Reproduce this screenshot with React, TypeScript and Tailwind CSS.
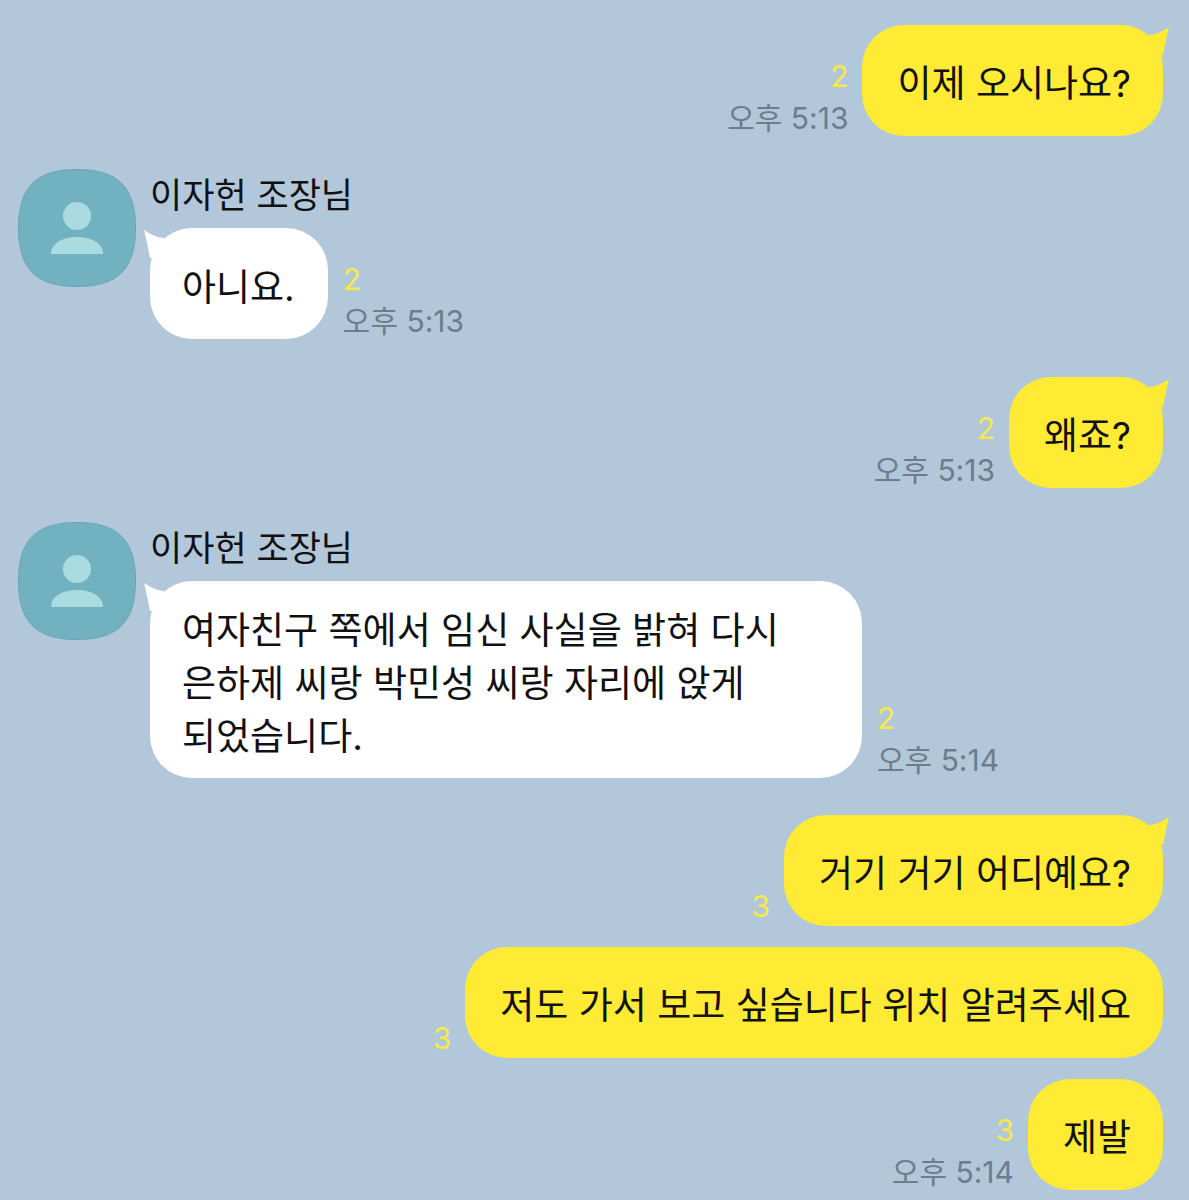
const font = { fontFamily: 'Inter, "Noto Sans CJK KR", "Noto Sans", sans-serif' };

function Meta({ count, time, align }: { count: string; time?: string; align: "left" | "right" }) {
  return (
    <div className={`flex flex-col ${align === "right" ? "items-end mr-[14px]" : "items-start ml-[15px]"} mb-[-2px]`}>
      <span className="text-[#f6ea4a] text-[30px] leading-[44px]">{count}</span>
      {time && <span className="text-[#6d7d8c] text-[30px] leading-[40px]">{time}</span>}
    </div>
  );
}

function MyBubble({ text, tail }: { text: string; tail?: boolean }) {
  return (
    <div className="relative bg-[#ffeb33] rounded-[42px] h-[111px] pl-[35px] pr-[32px] pt-[6px] flex items-center text-[37px] text-[#111] whitespace-nowrap">
      {tail && (
        <svg className="absolute right-[-6px] top-[2px]" width="30" height="30" viewBox="0 0 30 30">
          <path d="M10 8 Q18 8 30 0 Q27 12 24 28 L8 28 Z" fill="#ffeb33" />
        </svg>
      )}
      <span className="relative">{text}</span>
    </div>
  );
}

function MyRow({ text, count, time, tail, className }: { text: string; count: string; time?: string; tail?: boolean; className?: string }) {
  return (
    <div className={`flex justify-end items-end ${className ?? ""}`}>
      <Meta count={count} time={time} align="right" />
      <MyBubble text={text} tail={tail} />
    </div>
  );
}

function Avatar() {
  return (
    <svg className="shrink-0" width="118" height="118" viewBox="0 0 118 118">
      <path d="M59 .5C100 .5 117.5 18 117.5 59S100 117.5 59 117.5.5 100 .5 59 18 .5 59 .5Z" fill="#72b1bf" stroke="#68a6b4" />
      <circle cx="59" cy="47" r="14" fill="#a9dbe1" />
      <path d="M33 85C33 74 45 68 59 68S85 74 85 85Z" fill="#a9dbe1" />
    </svg>
  );
}

function TheirRow({ text, count, time, className }: { text: string; count: string; time: string; className?: string }) {
  return (
    <div className={`flex ${className ?? ""}`}>
      <Avatar />
      <div className="ml-[14px] min-w-0">
        <div className="text-[35px] leading-[52px] text-[#111] mb-[7px] h-[52px]">이자헌 조장님</div>
        <div className="flex items-end">
          <div className="relative bg-white rounded-[42px] min-h-[111px] max-w-[712px] pl-[32px] pr-[33px] pt-[23px] pb-[15px] flex items-center text-[37px] leading-[53px] text-[#111] [word-break:keep-all]">
            <svg className="absolute left-[-6px] top-[2px]" width="30" height="30" viewBox="0 0 30 30">
              <path d="M20 8 Q12 8 0 0 Q3 12 6 28 L22 28 Z" fill="#fff" />
            </svg>
            <span className="relative">{text}</span>
          </div>
          <Meta count={count} time={time} align="left" />
        </div>
      </div>
    </div>
  );
}

export default function App() {
  return (
    <div className="w-[1189px] h-[1200px] overflow-hidden bg-[#b2c7da] pt-[25px] pl-[18px] pr-[26px]" style={font}>
      <MyRow text="이제 오시나요?" count="2" time="오후 5:13" tail />
      <TheirRow className="mt-[33px]" text="아니요." count="2" time="오후 5:13" />
      <MyRow className="mt-[38px]" text="왜죠?" count="2" time="오후 5:13" tail />
      <TheirRow className="mt-[34px]" text="여자친구 쪽에서 임신 사실을 밝혀 다시 은하제 씨랑 박민성 씨랑 자리에 앉게 되었습니다." count="2" time="오후 5:14" />
      <MyRow className="mt-[37px]" text="거기 거기 어디예요?" count="3" tail />
      <MyRow className="mt-[21px]" text="저도 가서 보고 싶습니다 위치 알려주세요" count="3" />
      <MyRow className="mt-[21px]" text="제발" count="3" time="오후 5:14" />
    </div>
  );
}
